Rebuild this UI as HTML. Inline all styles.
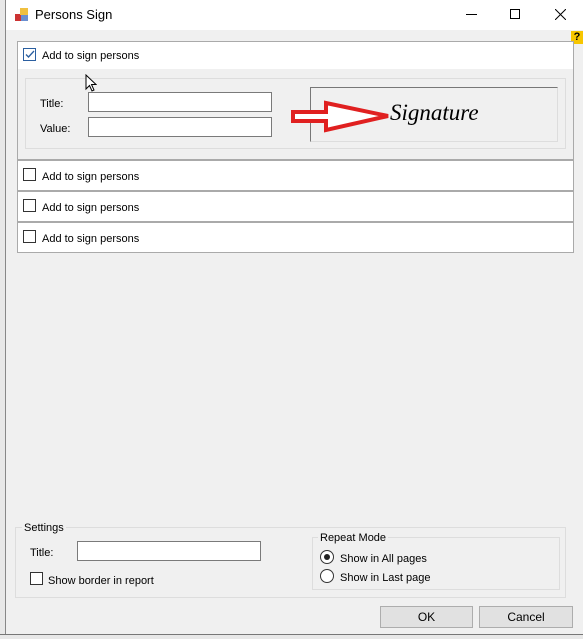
<!DOCTYPE html><html><head><style>
*{margin:0;padding:0;box-sizing:border-box}
body{width:583px;height:639px;background:#fff;font-family:"Liberation Sans",sans-serif;font-size:11px;line-height:17px;color:#000;position:relative;overflow:hidden}
.a{position:absolute}
.cb{position:absolute;width:13px;height:13px;border:1px solid #333;background:#fff}
.tb{position:absolute;background:#fff;border:1px solid #7a7a7a}
.row{position:absolute;left:17px;width:557px;height:31px;background:#fff;border:1px solid #aaa}
.btn{position:absolute;background:#e1e1e1;border:1px solid #adadad;text-align:center;line-height:20px;font-size:12px}
</style></head><body>
<div class="a" style="left:0;top:0;width:6px;height:639px;background:#e8e8e8;border-right:1px solid #888"></div>
<div class="a" style="left:0;top:634px;width:583px;height:5px;background:#e8e8e8;border-top:1px solid #777"></div>
<div class="a" style="left:6px;top:30px;width:577px;height:604px;background:#f0f0f0"></div>
<svg class="a" style="left:15px;top:8px" width="14" height="14"><rect x="0" y="6" width="6" height="7" fill="#c33"/><rect x="5" y="0" width="8" height="7" fill="#f0c040"/><rect x="6" y="7" width="7" height="6" fill="#6a8fd0"/></svg>
<div class="a" style="left:35px;top:7px;font-size:13px;line-height:15px">Persons Sign</div>
<div class="a" style="left:466px;top:14px;width:11px;height:1px;background:#000"></div>
<div class="a" style="left:510px;top:9px;width:10px;height:10px;border:1px solid #000"></div>
<svg class="a" style="left:555px;top:9px" width="11" height="11"><path d="M0 0L11 11M11 0L0 11" stroke="#000" stroke-width="1"/></svg>
<div class="a" style="left:571px;top:31px;width:12px;height:13px;background:#f7c600;font-weight:bold;font-size:11px;text-align:center;line-height:13px">?</div>
<div class="a" style="left:17px;top:41px;width:557px;height:119px;border:1px solid #aaa;background:#f0f0f0"></div>
<div class="a" style="left:18px;top:42px;width:555px;height:27px;background:#fff"></div>
<div class="cb" style="left:23px;top:48px;border-color:#2b5fa0"></div>
<svg class="a" style="left:25px;top:50px" width="10" height="9"><path d="M1 4.5L3.5 7L9 1" stroke="#2b5fa0" stroke-width="1.3" fill="none"/></svg>
<div class="a" style="left:42px;top:48px">Add to sign persons</div>
<div class="a" style="left:25px;top:78px;width:541px;height:71px;border:1px solid #ddd"></div>
<div class="a" style="left:40px;top:96px">Title:</div>
<div class="a" style="left:40px;top:121px">Value:</div>
<div class="tb" style="left:88px;top:92px;width:184px;height:20px"></div>
<div class="tb" style="left:88px;top:117px;width:184px;height:20px"></div>
<div class="a" style="left:310px;top:87px;width:248px;height:55px;border-top:1px solid #777;border-left:1px solid #777;border-right:1px solid #ddd;border-bottom:1px solid #ddd"></div>
<svg class="a" style="left:290px;top:100px" width="100" height="34"><path d="M3 12H36V3L98 16L36 30V21H3Z" fill="#fff" stroke="#e02020" stroke-width="4"/></svg>
<div class="a" style="left:390px;top:99px;font-family:'Liberation Serif',serif;font-style:italic;font-size:23px;line-height:27px">Signature</div>
<div class="row" style="top:160px"></div><div class="cb" style="left:23px;top:168px"></div><div class="a" style="left:42px;top:169px">Add to sign persons</div>
<div class="row" style="top:191px"></div><div class="cb" style="left:23px;top:199px"></div><div class="a" style="left:42px;top:200px">Add to sign persons</div>
<div class="row" style="top:222px"></div><div class="cb" style="left:23px;top:230px"></div><div class="a" style="left:42px;top:231px">Add to sign persons</div>
<div class="a" style="left:15px;top:527px;width:551px;height:71px;border:1px solid #ddd"></div>
<div class="a" style="left:22px;top:520px;background:#f0f0f0;padding:0 2px">Settings</div>
<div class="a" style="left:30px;top:545px">Title:</div>
<div class="tb" style="left:77px;top:541px;width:184px;height:20px"></div>
<div class="cb" style="left:30px;top:572px"></div><div class="a" style="left:48px;top:573px">Show border in report</div>
<div class="a" style="left:312px;top:537px;width:248px;height:53px;border:1px solid #ddd"></div>
<div class="a" style="left:318px;top:530px;background:#f0f0f0;padding:0 2px">Repeat Mode</div>
<div class="a" style="left:320px;top:550px;width:14px;height:14px;border:1px solid #333;border-radius:50%;background:#fff"></div>
<div class="a" style="left:324px;top:554px;width:6px;height:6px;border-radius:50%;background:#222"></div>
<div class="a" style="left:340px;top:551px">Show in All pages</div>
<div class="a" style="left:320px;top:569px;width:14px;height:14px;border:1px solid #333;border-radius:50%;background:#fff"></div>
<div class="a" style="left:340px;top:570px">Show in Last page</div>
<div class="btn" style="left:380px;top:606px;width:93px;height:22px">OK</div>
<div class="btn" style="left:479px;top:606px;width:94px;height:22px">Cancel</div>
<svg class="a" style="left:85px;top:74px" width="12" height="18"><path d="M1 1V15L4.5 11.5L7 17L9 16L6.5 10.5H11Z" fill="#fff" stroke="#000"/></svg>
</body></html>
